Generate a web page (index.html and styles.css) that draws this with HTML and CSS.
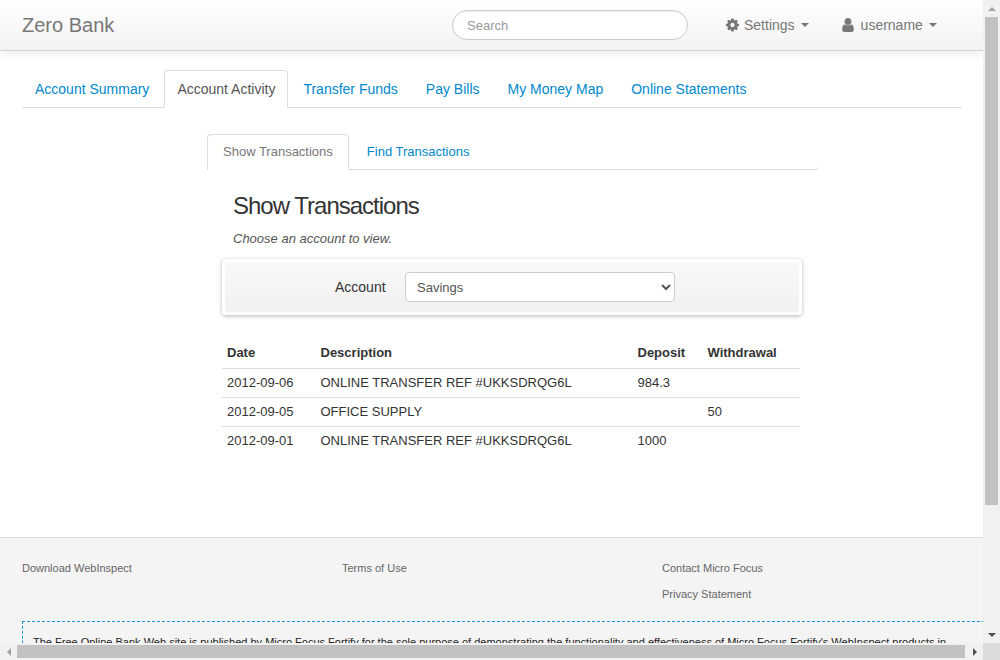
FILE: index.html
```html
<!DOCTYPE html>
<html lang="en">
<head>
<meta charset="utf-8">
<title>Zero Bank</title>
<link rel="stylesheet" href="styles.css">
</head>
<body>
<div class="window">
  <div class="viewport">
    <header class="navbar">
      <a class="brand">Zero Bank</a>
      <input class="search" type="text" placeholder="Search">
      <a class="menu menu-settings">
        <svg class="icon" width="13" height="14" viewBox="0 0 1536 1536"><path fill="#777" d="M1024 768q0-106-75-181t-181-75-181 75-75 181 75 181 181 75 181-75 75-181zm512-109v222q0 12-8 23t-20 13l-185 28q-19 54-39 91 35 50 107 138 10 12 10 25t-9 23q-27 37-99 108t-94 71q-12 0-26-9l-138-108q-44 23-91 38-16 136-29 186-7 28-36 28H657q-14 0-24.500-8.500T621 1506l-28-184q-49-16-90-37l-141 107q-10 9-25 9-14 0-25-11-126-114-165-168-7-10-7-23 0-12 8-23 15-21 51-66.500t54-70.500q-27-50-41-99L29 913q-13-2-21-12.500T0 877V655q0-12 8-23t19-13l186-28q14-46 39-92-40-57-107-138-10-12-10-24 0-10 9-23 26-36 98.500-107.500T337 135q13 0 26 10l138 107q44-23 91-38 16-136 29-186 7-28 36-28h222q14 0 24.500 8.500T915 30l28 184q49 16 90 37l142-107q9-9 24-9 13 0 25 10 129 119 165 170 7 8 7 22 0 12-8 23-15 21-51 66.500t-54 70.500q26 50 41 98l183 28q13 2 21 12.500t8 23.500z"/></svg>
        <span>Settings</span><i class="caret"></i>
      </a>
      <a class="menu menu-user">
        <svg class="icon" width="12" height="14" viewBox="0 0 1280 1536"><path fill="#777" d="M1280 1271q0 109-62.500 187t-150.500 78H213q-88 0-150.500-78T0 1271q0-85 8.500-160.500t31.500-152 58.500-131 94-89T327 704q101 99 313 99t313-99q65 0 134.500 35t94 89 58.500 131 31.500 152 8.500 160zM1024 384q0 159-112.500 271.500T640 768 368.500 655.500 256 384t112.500-271.500T640 0t271.500 112.500T1024 384z"/></svg>
        <span>username</span><i class="caret"></i>
      </a>
    </header>

    <main class="content">
      <nav class="tabs">
        <a class="tab">Account Summary</a>
        <a class="tab active">Account Activity</a>
        <a class="tab">Transfer Funds</a>
        <a class="tab">Pay Bills</a>
        <a class="tab">My Money Map</a>
        <a class="tab">Online Statements</a>
      </nav>

      <section class="activity">
        <nav class="subtabs">
          <a class="subtab active">Show Transactions</a>
          <a class="subtab">Find Transactions</a>
        </nav>
        <h2 class="title">Show Transactions</h2>
        <p class="hint">Choose an account to view.</p>
        <form class="well">
          <div class="well-inner">
            <label class="account-label" for="account">Account</label>
            <select class="account-select" id="account">
              <option>Savings</option>
            </select>
          </div>
        </form>
        <table class="transactions">
          <thead>
            <tr><th class="col-date">Date</th><th class="col-desc">Description</th><th class="col-dep">Deposit</th><th class="col-wd">Withdrawal</th></tr>
          </thead>
          <tbody>
            <tr><td>2012-09-06</td><td>ONLINE TRANSFER REF #UKKSDRQG6L</td><td>984.3</td><td></td></tr>
            <tr><td>2012-09-05</td><td>OFFICE SUPPLY</td><td></td><td>50</td></tr>
            <tr><td>2012-09-01</td><td>ONLINE TRANSFER REF #UKKSDRQG6L</td><td>1000</td><td></td></tr>
          </tbody>
        </table>
      </section>
    </main>

    <footer class="footer">
      <div class="footer-links">
        <ul class="footer-col"><li>Download WebInspect</li></ul>
        <ul class="footer-col"><li>Terms of Use</li></ul>
        <ul class="footer-col"><li>Contact Micro Focus</li><li>Privacy Statement</li></ul>
      </div>
      <div class="disclaimer">
        <p>The Free Online Bank Web site is published by Micro Focus Fortify for the sole purpose of demonstrating the functionality and effectiveness of Micro Focus Fortify's WebInspect products in</p>
      </div>
    </footer>
  </div>

  <div class="vbar">
    <i class="arrow arrow-up"></i>
    <div class="vtrack"><div class="vthumb"></div></div>
    <i class="arrow arrow-down"></i>
  </div>
  <div class="hbar">
    <i class="arrow arrow-left"></i>
    <div class="htrack"><div class="hthumb"></div></div>
    <i class="arrow arrow-right"></i>
  </div>
  <div class="corner"></div>
</div>
</body>
</html>
```

FILE: styles.css
```css
* { box-sizing: border-box; }
html, body { margin: 0; height: 100%; overflow: hidden; }
body { font-family: "Liberation Sans", Arial, sans-serif; font-size: 14px; color: #333; background: #fff; }

.window { width: 1000px; height: 660px; display: grid; grid-template-columns: 983px 17px; grid-template-rows: 643px 17px; }
.viewport { overflow: hidden; background: #fff; display: flex; flex-direction: column; }

/* navbar */
.navbar { flex: none; height: 51px; display: flex; align-items: center; padding-left: 22px; background: linear-gradient(#fff, #f2f2f2); border-bottom: 1px solid #d4d4d4; box-shadow: 0 1px 10px rgba(0,0,0,.1); position: relative; }
.brand { font-size: 20px; color: #777; width: 430px; }
.search { width: 236px; height: 30px; border: 1px solid #ccc; border-radius: 15px; padding: 0 14px; font: 13px "Liberation Sans", Arial, sans-serif; background: #fff; box-shadow: inset 0 1px 1px rgba(0,0,0,.075); outline: none; }
.search::placeholder { color: #999; opacity: 1; }
.menu { display: flex; align-items: center; font-size: 14px; color: #777; }
.menu-settings { margin-left: 38px; }
.menu-user { margin-left: 34px; }
.menu-settings .icon { margin-right: 5px; }
.menu-user .icon { margin-left: -1px; margin-right: 7px; }
.icon { display: block; }
.caret { width: 0; height: 0; margin-left: 6px; border-left: 4px solid transparent; border-right: 4px solid transparent; border-top: 4px solid #777; }

/* content */
.content { flex: none; height: 486px; padding: 19px 21px 0 22px; }
.tabs { display: flex; height: 38px; border-bottom: 1px solid #ddd; }
.tab { height: 38px; margin-right: 2px; padding: 8px 12px; line-height: 20px; border: 1px solid transparent; border-radius: 4px 4px 0 0; color: #0088cc; }
.tab.active { color: #555; background: #fff; border-color: #ddd #ddd transparent; }

.activity { width: 612px; margin: 26px 0 0 185px; }
.subtabs { display: flex; height: 36px; border-bottom: 1px solid #ddd; border-radius: 0 0 4px 0; }
.subtab { height: 36px; margin-right: 2px; padding: 7px 15px; line-height: 20px; font-size: 13px; border: 1px solid transparent; border-radius: 4px 4px 0 0; color: #0088cc; }
.subtab.active { color: #777; background: #fff; border-color: #ddd #ddd transparent; }
.title { margin: 21px 0 0 26px; font-size: 24px; font-weight: 400; line-height: 30px; letter-spacing: -1px; color: #333; }
.hint { margin: 9px 0 0 26px; font-size: 13px; line-height: 18px; font-style: italic; color: #555; }
.well { width: 580px; height: 56px; margin: 11px 0 0 15px; padding: 3px; border-radius: 4px; background: #fff; box-shadow: 0 1px 4px rgba(0,0,0,.3); }
.well-inner { height: 50px; display: flex; align-items: center; padding-left: 110px; border-radius: 3px; background: linear-gradient(#f9f9f9, #f1f1f1); }
.account-label { width: 70px; font-size: 14px; color: #333; }
.account-select { width: 270px; height: 30px; padding: 0 7px; font: 13px "Liberation Sans", Arial, sans-serif; color: #555; background: #fff; border: 1px solid #ccc; border-radius: 4px; }

.transactions { width: 578px; margin: 23px 0 0 15px; border-collapse: collapse; font-size: 13px; table-layout: fixed; }
.transactions th, .transactions td { height: 29px; padding: 0 5px; text-align: left; color: #333; }
.transactions th { height: 30px; font-weight: 700; border-bottom: 1px solid #ddd; }
.transactions tbody tr + tr td { border-top: 1px solid #ddd; }
.col-date { width: 93.5px; }
.col-desc { width: 317px; }
.col-dep { width: 70px; }

/* footer */
.footer { flex: none; height: 400px; padding: 0 0 0 22px; background: #f4f4f4; border-top: 1px solid #ddd; width: 1100px; }
.footer-links { display: flex; padding-top: 17px; height: 83px; }
.footer-col { list-style: none; margin: 0; padding: 0; width: 320px; font-size: 11px; color: #666; }
.footer-col li { line-height: 26px; }
.disclaimer { border: 1px dashed #0e9ad4; padding: 13px 10px; color: #222; font-size: 11px; line-height: 14px; }
.disclaimer p { margin: 0; white-space: nowrap; }

/* scrollbars */
.vbar, .hbar { background: #f1f1f1; }
.corner { background: #dcdcdc; }
.vbar { display: flex; flex-direction: column; }
.hbar { display: flex; }
.vtrack { flex: 1; padding: 0 2px; }
.vthumb { height: 488px; background: #c1c1c1; }
.htrack { flex: 1; padding: 2px 0; }
.hthumb { width: 948px; height: 13px; background: #c1c1c1; }
.arrow { flex: none; display: flex; width: 17px; height: 17px; }
.arrow::after { content: ""; margin: auto; width: 0; height: 0; border: 4px solid transparent; }
.arrow-up::after { border-bottom-color: #a3a3a3; border-top-width: 0; }
.arrow-down::after { border-top-color: #505050; border-bottom-width: 0; }
.arrow-left::after { border-right-color: #a3a3a3; border-left-width: 0; }
.arrow-right::after { border-left-color: #505050; border-right-width: 0; }
```
